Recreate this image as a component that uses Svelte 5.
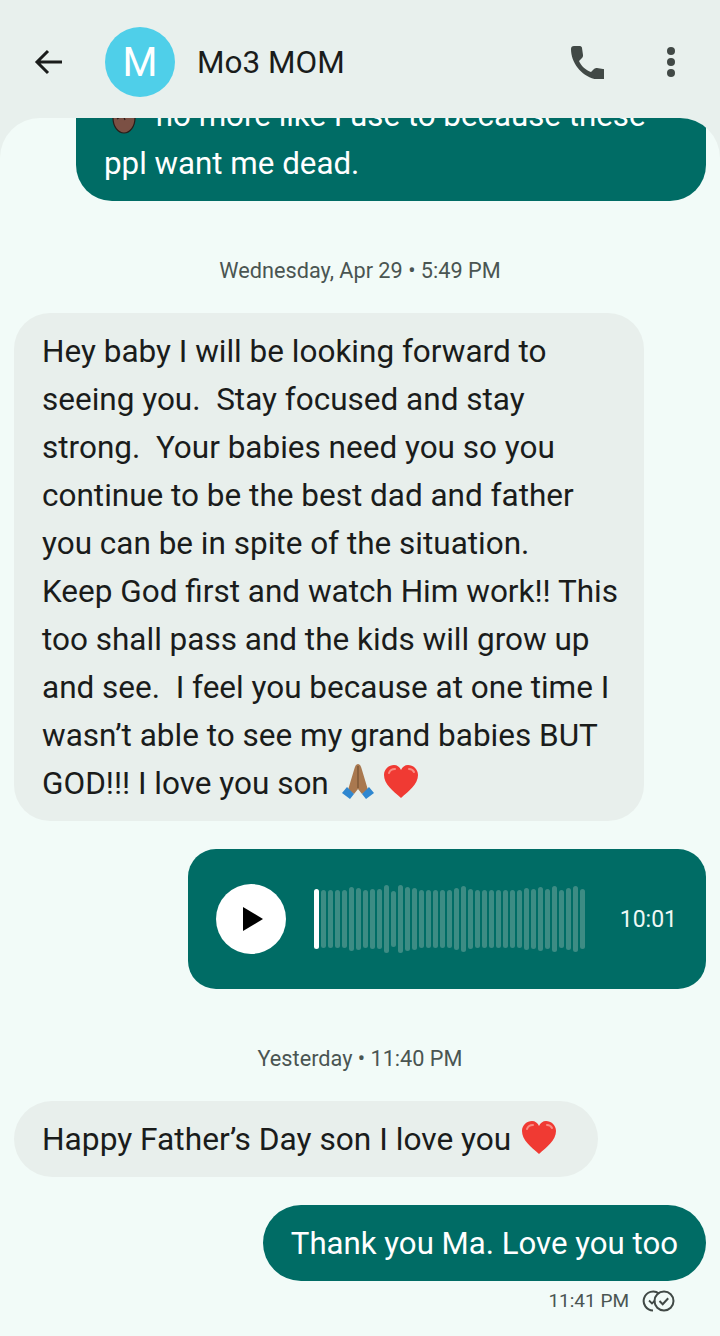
<script>
	const wave = [58, 58, 58, 58, 64, 62, 58, 60, 60, 68, 56, 68, 64, 62, 58, 58, 58, 58, 58, 62, 66, 60, 58, 58, 58, 58, 58, 58, 58, 62, 60, 64, 60, 66, 58, 62, 66, 60];
</script>

{#snippet heart()}
	<svg class="emoji heart" viewBox="0 0 36 36" aria-hidden="true">
		<path d="M18 34C10 27 1 20 1 11 1 5 6 1 11 1c3 0 6 2 7 5 1-3 4-5 7-5 5 0 10 4 10 10 0 9-9 16-17 23z" fill="#f03a33" />
		<path d="M6 9c1-3 3-4 6-4M26 5c2 0 4 1 5 3" fill="none" stroke="#f98d84" stroke-width="2" stroke-linecap="round" />
	</svg>
{/snippet}

<div class="screen">
	<header class="topbar">
		<button class="icon back" aria-label="Back">
			<svg viewBox="0 0 30 30" width="30" height="30"><path d="M28 15H3M14 4 3 15l11 11" fill="none" stroke="#1a1c1b" stroke-width="3" /></svg>
		</button>
		<div class="avatar">M</div>
		<div class="name">Mo3 MOM</div>
		<button class="icon phone" aria-label="Call">
			<svg viewBox="0 0 34 34" width="34" height="34"><path d="M1 4c0-2 1-3 3-3h6c1 0 2 1 2 2l1 7c0 1 0 2-1 3l-3 3c2 5 7 9 12 11l3-3c1-1 2-1 3-1l6 1c1 0 2 1 2 2v6c0 2-1 3-3 3C15 35 1 20 1 4z" fill="#414946" /></svg>
		</button>
		<button class="icon dots" aria-label="More">
			<span></span><span></span><span></span>
		</button>
	</header>

	<main class="thread">
		<div class="bubble out first">
			<svg class="emoji stone" viewBox="0 0 30 44" aria-hidden="true">
				<ellipse cx="15" cy="26" rx="11" ry="15" fill="#7b5044" stroke="#2a1c18" stroke-width="1.2" />
				<path d="M8 27l6-4 2 5M16 23l6-3" fill="none" stroke="#2a1c18" stroke-width="1.2" />
			</svg>
			no more like I use to because these<br />ppl want me dead.
		</div>

		<div class="stamp first-stamp">Wednesday, Apr 29 • 5:49 PM</div>

		<div class="bubble in long">
			Hey baby I will be looking forward to<br />
			seeing you.&nbsp; Stay focused and stay<br />
			strong.&nbsp; Your babies need you so you<br />
			continue to be the best dad and father<br />
			you can be in spite of the situation.<br />
			Keep God first and watch Him work!! This<br />
			too shall pass and the kids will grow up<br />
			and see.&nbsp; I feel you because at one time I<br />
			wasn’t able to see my grand babies BUT<br />
			GOD!!! I love you son
			<svg class="emoji hands" viewBox="0 0 36 36" aria-hidden="true">
				<path d="M18 0c-2 0-3 2-4 6L8 26l6 4 4-5 4 5 6-4-6-20c-1-4-2-6-4-6z" fill="#a9784f" />
				<path d="M18 2v22" stroke="#7d5636" stroke-width="1.4" />
				<path d="M2 29l5-6 7 7-4 5zM34 29l-5-6-7 7 4 5z" fill="#2f87d0" />
			</svg>
			{@render heart()}
		</div>

		<div class="audio">
			<button class="play" aria-label="Play">
				<svg viewBox="0 0 20 24" width="20" height="24"><path d="M0 0l20 12L0 24z" fill="#000" /></svg>
			</button>
			<div class="wave">
				<span class="head"></span>
				{#each wave as h}
					<span class="bar" style="height: {h}px"></span>
				{/each}
			</div>
			<div class="length">10:01</div>
		</div>

		<div class="stamp">Yesterday • 11:40 PM</div>

		<div class="bubble in pill">Happy Father’s Day son I love you {@render heart()}</div>

		<div class="bubble out pill reply">Thank you Ma. Love you too</div>

		<div class="sent">
			<span>11:41 PM</span>
			<svg viewBox="0 0 34 22" width="34" height="22" aria-hidden="true">
				<path d="M12 20.5a9.5 9.5 0 1 1 6-17" fill="none" stroke="#414946" stroke-width="2" />
				<path d="M8 10.5l3 3 3-3" fill="none" stroke="#414946" stroke-width="1.8" />
				<circle cx="23" cy="11" r="9.5" fill="none" stroke="#414946" stroke-width="2" />
				<path d="M18.5 11l3.2 3.2 5.5-6" fill="none" stroke="#414946" stroke-width="2" />
			</svg>
		</div>
	</main>
</div>

<style>
	:global(body) {
		background: #e8f0ed;
	}

	.screen {
		width: 720px;
		height: 1336px;
		display: flex;
		flex-direction: column;
		overflow: hidden;
		background: #e8f0ed;
		font-family: Roboto, "Liberation Sans", sans-serif;
		color: #1a1c1b;
	}

	.topbar {
		height: 118px;
		flex: none;
		display: flex;
		align-items: center;
		padding: 6px 0 0 34px;
		box-sizing: border-box;
	}

	.icon {
		background: none;
		border: none;
		padding: 0;
		display: flex;
	}

	.back {
		margin-right: 41px;
	}

	.avatar {
		width: 70px;
		height: 70px;
		border-radius: 50%;
		background: #4fcfe9;
		color: #fff;
		font-size: 40px;
		display: flex;
		align-items: center;
		justify-content: center;
		margin-right: 22px;
	}

	.name {
		font-size: 31.5px;
		flex: 1;
	}

	.phone {
		margin-right: 63px;
	}

	.dots {
		flex-direction: column;
		gap: 3px;
		margin-right: 45px;
	}

	.dots span {
		width: 8px;
		height: 8px;
		border-radius: 50%;
		background: #414946;
	}

	.thread {
		flex: 1;
		min-height: 0;
		overflow: hidden;
		background: #f2fbf8;
		border-radius: 40px 40px 0 0;
		display: flex;
		flex-direction: column;
		padding: 0 14px;
	}

	.bubble {
		font-size: 31.5px;
		line-height: 48px;
		padding: 15px 28px 13px;
		box-sizing: border-box;
		flex: none;
		white-space: nowrap;
	}

	.in {
		background: #e8efec;
		align-self: flex-start;
	}

	.out {
		background: #006c65;
		color: #fff;
		align-self: flex-end;
	}

	.first {
		width: 630px;
		margin-top: -41px;
		border-radius: 36px;
		font-size: 31.3px;
	}

	.long {
		width: 630px;
		border-radius: 36px;
	}

	.pill {
		border-radius: 38px;
	}

	.in.pill {
		font-size: 31.7px;
	}

	.in.pill .heart {
		margin: 0 13px 0 2px;
	}

	.reply {
		margin-top: 28px;
		font-size: 31.2px;
	}

	.emoji {
		display: inline-block;
		width: 36px;
		height: 36px;
		vertical-align: -6px;
	}

	.stone {
		width: 30px;
		height: 44px;
		vertical-align: -10px;
		margin: 0 9px 0 5px;
	}

	.hands {
		margin-left: 3px;
	}

	.stamp {
		font-size: 21.7px;
		line-height: 24px;
		color: #4a5552;
		text-align: center;
		margin: 58px 0 30px;
	}

	.first-stamp {
		margin: 58px 0 30px;
	}

	.audio {
		width: 518px;
		height: 140px;
		flex: none;
		align-self: flex-end;
		margin-top: 28px;
		box-sizing: border-box;
		padding: 0 29px 0 28px;
		border-radius: 28px;
		background: #006c65;
		display: flex;
		align-items: center;
	}

	.play {
		width: 70px;
		height: 70px;
		flex: none;
		border: none;
		padding: 0 0 0 4px;
		border-radius: 50%;
		background: #fff;
		display: flex;
		align-items: center;
		justify-content: center;
		margin-right: 28px;
	}

	.wave {
		flex: 1;
		display: flex;
		align-items: center;
		gap: 2px;
	}

	.bar,
	.head {
		width: 5px;
		border-radius: 3px;
		flex: none;
	}

	.bar {
		background: #3d8c84;
	}

	.head {
		height: 60px;
		background: #fff;
	}

	.length {
		font-size: 23px;
		color: #eef8f5;
	}

	.sent {
		align-self: flex-end;
		display: flex;
		align-items: center;
		gap: 12px;
		margin: 8px 31px 0 0;
		font-size: 19px;
		line-height: 24px;
		color: #4a5552;
	}
</style>
